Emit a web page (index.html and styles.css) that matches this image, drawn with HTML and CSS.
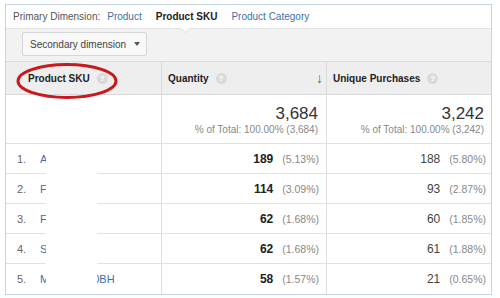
FILE: index.html
```html
<!DOCTYPE html>
<html>
<head>
<meta charset="utf-8">
<link rel="stylesheet" href="styles.css">
</head>
<body>
<div class="panel">
  <div class="dimbar">
    <span class="label">Primary Dimension:</span>
    <a class="dim">Product</a>
    <span class="dim active">Product SKU</span>
    <a class="dim">Product Category</a>
  </div>
  <div class="toolbar">
    <span class="notch"></span>
    <div class="btn">Secondary dimension <span class="caret"></span></div>
  </div>
  <div class="grid">
    <div class="row head">
      <div class="cell c1"><b>Product SKU</b><span class="q">?</span></div>
      <div class="cell c2"><b>Quantity</b><span class="q">?</span><span class="sort">&#8595;</span></div>
      <div class="cell c3"><b>Unique Purchases</b><span class="q">?</span></div>
    </div>
    <div class="row totals">
      <div class="cell c1"></div>
      <div class="cell c2 tot"><div class="big">3,684</div><div class="sub">% of Total: 100.00% (3,684)</div></div>
      <div class="cell c3 tot"><div class="big">3,242</div><div class="sub">% of Total: 100.00% (3,242)</div></div>
    </div>
    <div class="row body">
      <div class="cell c1"><span class="idx">1.</span><a class="sku">AXXXXXX</a></div>
      <div class="cell c2 num"><b>189</b><span class="pct">(5.13%)</span></div>
      <div class="cell c3 num"><span>188</span><span class="pct">(5.80%)</span></div>
    </div>
    <div class="row body">
      <div class="cell c1"><span class="idx">2.</span><a class="sku">FXXXXXX</a></div>
      <div class="cell c2 num"><b>114</b><span class="pct">(3.09%)</span></div>
      <div class="cell c3 num"><span>93</span><span class="pct">(2.87%)</span></div>
    </div>
    <div class="row body">
      <div class="cell c1"><span class="idx">3.</span><a class="sku">FXXXXXX</a></div>
      <div class="cell c2 num"><b>62</b><span class="pct">(1.68%)</span></div>
      <div class="cell c3 num"><span>60</span><span class="pct">(1.85%)</span></div>
    </div>
    <div class="row body">
      <div class="cell c1"><span class="idx">4.</span><a class="sku">SXXXXXX</a></div>
      <div class="cell c2 num"><b>62</b><span class="pct">(1.68%)</span></div>
      <div class="cell c3 num"><span>61</span><span class="pct">(1.88%)</span></div>
    </div>
    <div class="row body last">
      <div class="cell c1"><span class="idx">5.</span><a class="sku">MXXXXXX0BH</a></div>
      <div class="cell c2 num"><b>58</b><span class="pct">(1.57%)</span></div>
      <div class="cell c3 num"><span>21</span><span class="pct">(0.65%)</span></div>
    </div>
    <div class="redact"></div>
  </div>
  <svg class="ring" width="104" height="40" viewBox="0 0 104 40"><ellipse cx="52" cy="20" rx="49" ry="16.5" fill="none" stroke="#c8191e" stroke-width="3"/></svg>
</div>
</body>
</html>
```

FILE: styles.css
```css
* { box-sizing: border-box; }
html, body { margin: 0; padding: 0; background: #fff; }
body {
  font-family: "Liberation Sans", Arial, sans-serif;
  color: #333;
  width: 500px;
  height: 298px;
  overflow: hidden;
}
.panel {
  position: relative;
  margin: 4px 0 0 5px;
  width: 487px;
  border: 1px solid #c3d4e3;
}
.dimbar {
  height: 23px;
  display: flex;
  align-items: center;
  padding-left: 7px;
  font-size: 10px;
  background: #fff;
  white-space: nowrap;
}
.label { color: #555; margin-right: 7px; }
.dim { color: #3f6fa6; margin-right: 14px; }
.dim.active { color: #222; font-weight: bold; margin-right: 14px; }
.toolbar {
  position: relative;
  height: 33px;
  background: #f2f2f2;
  border-top: 1px solid #e3e3e3;
  padding: 3px 0 0 16px;
}
.notch {
  position: absolute;
  left: 176px;
  top: -1px;
  width: 7px;
  height: 7px;
  background: #fff;
  border-right: 1px solid #e3e3e3;
  border-bottom: 1px solid #e3e3e3;
  transform: translateY(-3px) rotate(45deg);
}
.btn {
  width: 125px;
  height: 24px;
  background: #f8f8f8;
  border: 1px solid #d6d6d6;
  border-radius: 2px;
  font-size: 10px;
  color: #444;
  display: flex;
  align-items: center;
  padding-left: 7px;
  white-space: nowrap;
}
.caret {
  margin-left: 8px;
  width: 0; height: 0;
  border-left: 3.5px solid transparent;
  border-right: 3.5px solid transparent;
  border-top: 4px solid #555;
}
.grid { position: relative; }
.row {
  display: grid;
  grid-template-columns: 156px 165px 1fr;
  border-bottom: 1px solid #e2e2e2;
}
.row.last { border-bottom: none; }
.cell { border-right: 1px solid #dcdcdc; display: flex; align-items: center; }
.cell.c3 { border-right: none; }
.head {
  height: 34px;
  background: #eeeeee;
  border-top: 1px solid #dadada;
  border-bottom: 1px solid #d8d8d8;
  font-size: 10px;
  color: #222;
  white-space: nowrap;
}
.head .c1 { padding-left: 22px; }
.head .c2 { padding-left: 6px; padding-right: 3px; }
.head .c3 { padding-left: 6px; }
.q {
  display: inline-flex;
  align-items: center;
  justify-content: center;
  width: 11px; height: 11px;
  border-radius: 50%;
  background: #dadada;
  color: #fff;
  font-size: 8px;
  font-weight: bold;
  margin-left: 7px;
}
.sort { margin-left: auto; color: #666; font-size: 14px; font-weight: bold; }
.totals { height: 49px; }
.tot {
  flex-direction: column;
  align-items: flex-end;
  justify-content: center;
  padding-right: 8px;
  padding-top: 2px;
}
.c3.tot { padding-right: 7px; }
.big { font-size: 17px; line-height: 18px; color: #333; }
.sub { font-size: 10px; color: #888; line-height: 13px; }
.body { height: 30px; font-size: 11px; }
.body .c1 { padding-left: 11px; }
.idx { color: #666; width: 23px; }
.sku { color: #3f6fa6; }
.num { justify-content: flex-end; padding-right: 7px; font-size: 12px; }
.c3.num { padding-right: 5px; color: #444; }
.num b { color: #222; }
.pct { font-size: 10.5px; color: #888; margin-left: 9px; }
.redact {
  position: absolute;
  left: 40px;
  top: 88px;
  width: 51px;
  height: 137px;
  background: #fff;
}
.ring { position: absolute; left: 9px; top: 56px; }
```
